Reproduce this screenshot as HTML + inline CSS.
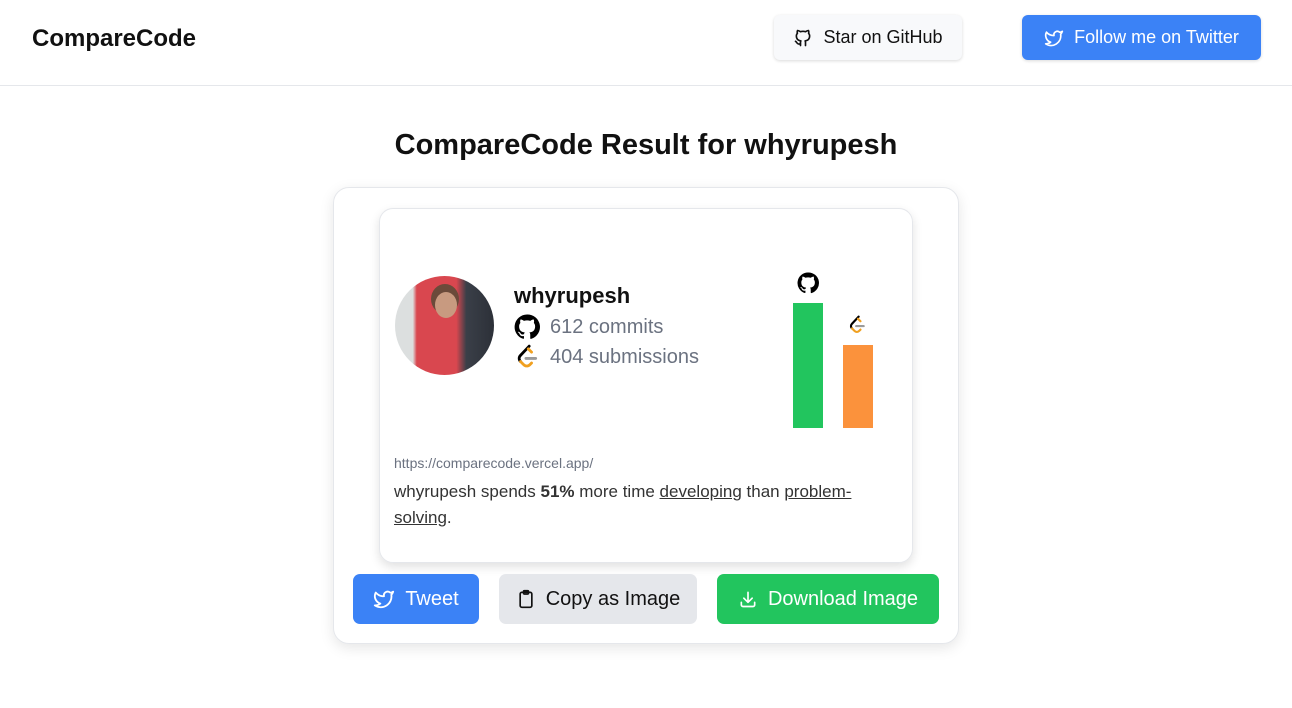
<!DOCTYPE html>
<html><head><style>
*{box-sizing:border-box;margin:0;padding:0}
body{width:1292px;height:708px;background:#fff;font-family:"Liberation Sans",sans-serif;color:#111;position:relative;overflow:hidden}
.hdr{position:absolute;left:0;top:0;width:1292px;height:86px;border-bottom:1px solid #e5e7eb}
.logo{position:absolute;left:32px;top:25px;font-size:24px;font-weight:bold}
.btn{position:absolute;display:flex;align-items:center;justify-content:center;gap:10px;border-radius:6px;font-size:18px}
.gh{left:774px;top:15px;width:188px;height:45px;background:#f8f9fb;box-shadow:0 1px 3px rgba(0,0,0,.15)}
.tw{left:1022px;top:15px;width:239px;height:45px;background:#3b82f6;color:#fff;box-shadow:0 1px 3px rgba(0,0,0,.15)}
h1{position:absolute;top:129px;left:0;width:1292px;text-align:center;font-size:29px;font-weight:bold}
.outer{position:absolute;left:333px;top:187px;width:626px;height:457px;border:1px solid #e5e7eb;border-radius:16px;box-shadow:0 4px 14px rgba(0,0,0,.1)}
.card{position:absolute;left:379px;top:208px;width:534px;height:355px;border:1px solid #e5e7eb;border-radius:14px;box-shadow:0 4px 10px rgba(0,0,0,.12)}
.av{position:absolute;left:395px;top:276px;width:99px;height:99px;border-radius:50%;overflow:hidden;background:linear-gradient(90deg,#dcdfdf 0 18%,#d9474f 22% 62%,#3a3f48 72%,#2c3038)}
.av i{position:absolute;border-radius:50%}
.name{position:absolute;left:514px;top:283px;font-size:22px;font-weight:bold}
.st{position:absolute;left:514px;font-size:20px;color:#6b7280;display:flex;align-items:center;gap:10px}
.bar{position:absolute;width:30px}
.url{position:absolute;left:394px;top:455px;font-size:14px;color:#6b7280}
.txt{position:absolute;left:394px;top:479px;width:500px;font-size:17px;line-height:26px;color:#333}
.b2{position:absolute;height:50px;top:574px;border-radius:7px;display:flex;align-items:center;justify-content:center;gap:10px;font-size:20px}
</style></head><body>
<div class="hdr"><div class="logo">CompareCode</div></div>
<div class="btn gh"><svg width="20" height="20" viewBox="0 0 24 24" fill="none" stroke="#111" stroke-width="2" stroke-linecap="round" stroke-linejoin="round"><path d="M9 19c-4.3 1.4-4.3-2.5-6-3m12 5v-3.5c0-1 .1-1.4-.5-2 2.8-.3 5.5-1.4 5.5-6a4.6 4.6 0 0 0-1.3-3.2 4.2 4.2 0 0 0-.1-3.2s-1.1-.3-3.5 1.3a12.3 12.3 0 0 0-6.2 0C6.5 2.8 5.4 3.1 5.4 3.1a4.2 4.2 0 0 0-.1 3.2A4.6 4.6 0 0 0 4 9.5c0 4.6 2.7 5.7 5.5 6-.6.6-.6 1.2-.5 2V21"/></svg>Star on GitHub</div>
<div class="btn tw"><svg width="20" height="20" viewBox="0 0 24 24" fill="none" stroke="#fff" stroke-width="2" stroke-linejoin="round"><path d="M22 4s-.7 2.1-2 3.4c1.6 10-9.4 17.3-18 11.6 2.2.1 4.4-.6 6-2C3 15.5.5 9.6 3 5c2.2 2.6 5.6 4.1 9 4-.9-4.2 4-6.6 7-3.8 1.1 0 3-1.2 3-1.2z"/></svg>Follow me on Twitter</div>
<h1>CompareCode Result for whyrupesh</h1>
<div class="outer"></div>
<div class="card"></div>
<div class="av"><i style="left:36px;top:8px;width:28px;height:30px;background:#6b4a3a"></i><i style="left:40px;top:16px;width:22px;height:26px;background:#c89a80"></i></div>
<div class="name">whyrupesh</div>
<div class="st" style="top:314px"><svg width="26" height="26" viewBox="0 0 24 24"><path fill="#000" d="M12 .5a11.5 11.5 0 0 0-3.6 22.4c.6.1.8-.3.8-.6v-2c-3.2.7-3.9-1.5-3.9-1.5-.5-1.3-1.300-1.7-1.3-1.7-1-.7.1-.7.1-.7 1.2.1 1.8 1.2 1.8 1.2 1 1.8 2.7 1.3 3.4 1 .1-.8.4-1.3.7-1.6-2.6-.3-5.3-1.3-5.3-5.7 0-1.3.5-2.3 1.2-3.1-.1-.3-.5-1.5.1-3.1 0 0 1-.3 3.2 1.2a11 11 0 0 1 5.800 0c2.2-1.5 3.2-1.2 3.2-1.2.6 1.6.2 2.8.1 3.1.7.8 1.2 1.9 1.2 3.1 0 4.4-2.7 5.4-5.3 5.7.4.4.8 1.1.8 2.2v3.2c0 .3.2.7.8.6A11.5 11.5 0 0 0 12 .5z"/></svg>612 commits</div>
<div class="st" style="top:344px"><svg width="26" height="26" viewBox="0 0 24 24" fill="none" stroke-width="2.6" stroke-linecap="round" stroke-linejoin="round"><path d="M14 2 6 10.5c-1.6 1.7-1.6 4 0 5.6" stroke="#000"/><path d="M6 16.1l3 3c1.6 1.6 4 1.6 5.6 0l1.6-1.6" stroke="#f0a020"/><path d="M16.2 7.5l-3-3" stroke="#f0a020"/><path d="M11 13.3h9" stroke="#9a9a9a"/></svg>404 submissions</div>
<svg style="position:absolute;left:797px;top:272px" width="22" height="22" viewBox="0 0 24 24"><path fill="#000" d="M12 .5a11.5 11.5 0 0 0-3.6 22.4c.6.1.8-.3.8-.6v-2c-3.2.7-3.9-1.5-3.9-1.5-.5-1.3-1.3-1.7-1.3-1.7-1-.7.1-.7.1-.7 1.2.1 1.8 1.2 1.8 1.2 1 1.8 2.7 1.3 3.4 1 .1-.8.4-1.3.7-1.6-2.6-.3-5.3-1.3-5.3-5.7 0-1.3.5-2.3 1.2-3.1-.1-.3-.5-1.5.1-3.1 0 0 1-.3 3.2 1.2a11 11 0 0 1 5.8 0c2.2-1.5 3.2-1.2 3.2-1.2.6 1.6.2 2.8.1 3.1.7.8 1.2 1.9 1.2 3.1 0 4.4-2.7 5.4-5.3 5.7.4.4.8 1.1.8 2.2v3.2c0 .3.2.7.8.6A11.5 11.5 0 0 0 12 .5z"/></svg>
<svg style="position:absolute;left:847px;top:315px" width="20" height="20" viewBox="0 0 24 24" fill="none" stroke-width="2.6" stroke-linecap="round" stroke-linejoin="round"><path d="M14 2 6 10.5c-1.6 1.7-1.6 4 0 5.6" stroke="#000"/><path d="M6 16.1l3 3c1.6 1.6 4 1.6 5.6 0l1.6-1.6" stroke="#f0a020"/><path d="M16.2 7.5l-3-3" stroke="#f0a020"/><path d="M11 13.3h9" stroke="#9a9a9a"/></svg>
<div class="bar" style="left:793px;top:303px;height:125px;background:#22c55e"></div>
<div class="bar" style="left:843px;top:345px;height:83px;background:#fb923c"></div>
<div class="url">https://comparecode.vercel.app/</div>
<div class="txt">whyrupesh spends <b>51%</b> more time <u>developing</u> than <u>problem-<br>solving</u>.</div>
<div class="b2" style="left:353px;width:126px;background:#3b82f6;color:#fff"><svg width="22" height="22" viewBox="0 0 24 24" fill="none" stroke="#fff" stroke-width="2" stroke-linejoin="round"><path d="M22 4s-.7 2.1-2 3.4c1.6 10-9.4 17.3-18 11.6 2.2.1 4.4-.6 6-2C3 15.5.5 9.6 3 5c2.2 2.6 5.6 4.1 9 4-.9-4.2 4-6.6 7-3.8 1.1 0 3-1.2 3-1.2z"/></svg>Tweet</div>
<div class="b2" style="left:499px;width:198px;background:#e5e7eb;color:#111"><svg width="20" height="20" viewBox="0 0 24 24" fill="none" stroke="#111" stroke-width="2" stroke-linejoin="round"><rect x="5" y="4" width="14" height="18" rx="2"/><rect x="9" y="2" width="6" height="4" rx="1"/></svg>Copy as Image</div>
<div class="b2" style="left:717px;width:222px;background:#22c55e;color:#fff"><svg width="20" height="20" viewBox="0 0 24 24" fill="none" stroke="#fff" stroke-width="2" stroke-linecap="round" stroke-linejoin="round"><path d="M4 16v3a2 2 0 0 0 2 2h12a2 2 0 0 0 2-2v-3M7 11l5 5 5-5M12 4v12"/></svg>Download Image</div>
</body></html>
